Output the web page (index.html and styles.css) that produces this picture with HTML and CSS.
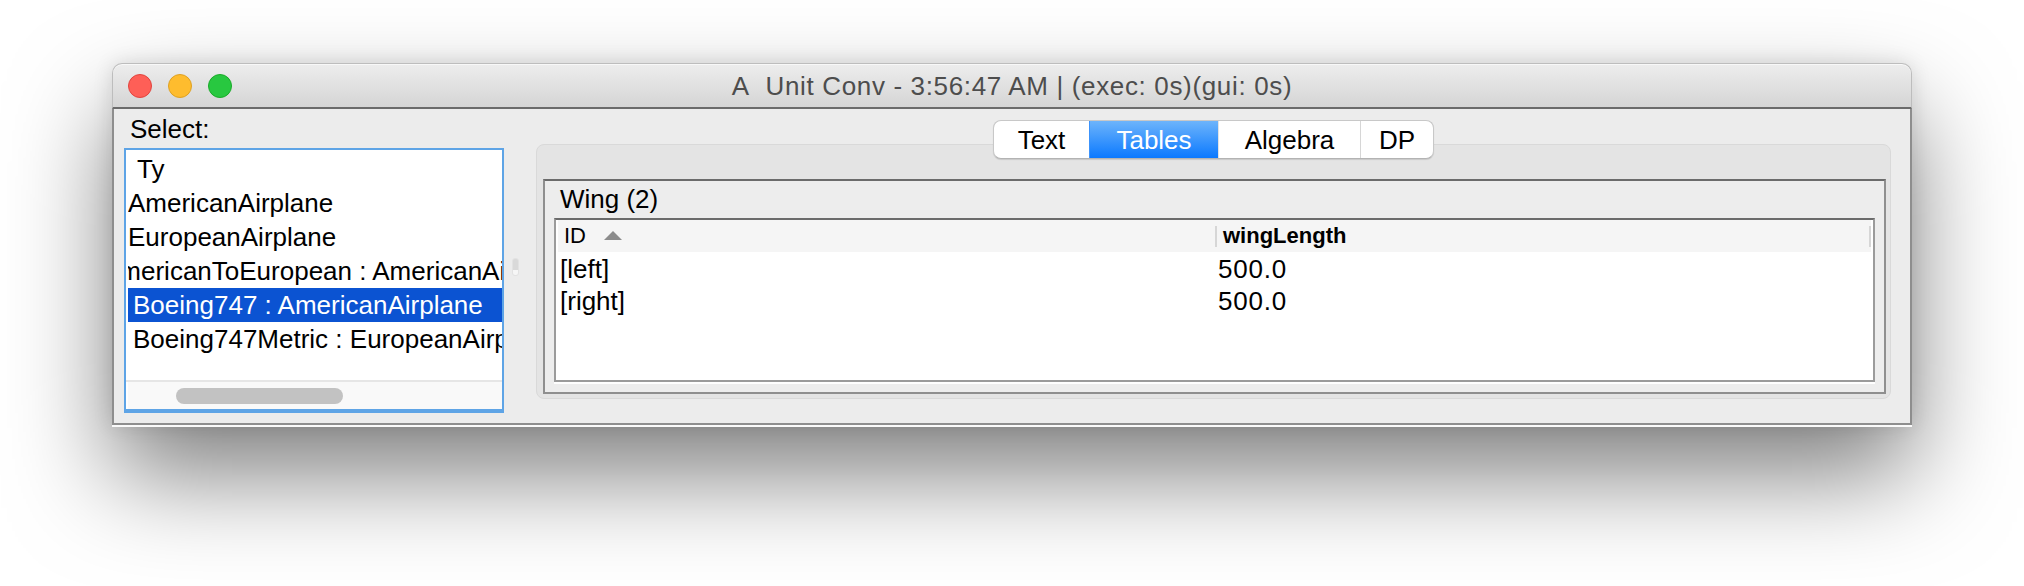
FILE: index.html
```html
<!DOCTYPE html>
<html>
<head>
<meta charset="utf-8">
<link rel="stylesheet" href="styles.css">
</head>
<body>
<div class="window">
  <div class="titlebar">
    <div class="lights">
      <span class="light red"></span>
      <span class="light yellow"></span>
      <span class="light green"></span>
    </div>
    <div class="title">A&nbsp; Unit Conv - 3:56:47 AM | (exec: 0s)(gui: 0s)</div>
    <div></div>
  </div>
  <div class="content">
    <div class="left">
      <div class="select-label">Select:</div>
      <div class="listbox">
        <div class="viewport">
          <div class="row indent-ty">Ty</div>
          <div class="row">AmericanAirplane</div>
          <div class="row">EuropeanAirplane</div>
          <div class="row"><span class="clipped">AmericanToEuropean : AmericanAirplane</span></div>
          <div class="row selected">Boeing747 : AmericanAirplane</div>
          <div class="row indent-b">Boeing747Metric : EuropeanAirplane</div>
        </div>
        <div class="hscroll"><div class="thumb"></div></div>
      </div>
    </div>
    <div class="divider"><div class="knob"></div></div>
    <div class="right">
      <div class="tabs">
        <div class="tab t-text">Text</div>
        <div class="tab t-tables active">Tables</div>
        <div class="tab t-algebra">Algebra</div>
        <div class="tab t-dp">DP</div>
      </div>
      <div class="tabbox">
        <div class="panel">
          <div class="panel-label">Wing (2)</div>
          <div class="table">
            <div class="thead">
              <div class="th col1">ID<span class="sort-arrow"></span></div>
              <div class="sep"></div>
              <div class="th col2">wingLength</div>
              <div class="sep"></div>
            </div>
            <div class="tr">
              <div class="td c1">[left]</div>
              <div class="td c2">500.0</div>
            </div>
            <div class="tr">
              <div class="td c1">[right]</div>
              <div class="td c2">500.0</div>
            </div>
          </div>
        </div>
      </div>
    </div>
  </div>
</div>
</body>
</html>
```
FILE: styles.css
```css
html, body {
  margin: 0;
  padding: 0;
}
body {
  width: 2024px;
  height: 586px;
  overflow: hidden;
  background: #ffffff;
  font-family: "Liberation Sans", Arial, sans-serif;
  color: #000;
}
.window {
  margin: 63px 0 0 112px;
  width: 1800px;
  border-radius: 10px 10px 0 0;
  box-shadow: 0 50px 100px rgba(0,0,0,0.5), 0 0 20px rgba(0,0,0,0.12);
  background: #ececec;
}
.titlebar {
  box-sizing: border-box;
  height: 46px;
  border: 1px solid #bdbdbd;
  border-bottom: 2px solid #6b6b6b;
  border-radius: 10px 10px 0 0;
  background: linear-gradient(#ededed, #d5d5d5);
  box-shadow: inset 0 1px 0 #f8f8f8;
  display: grid;
  grid-template-columns: 1fr auto 1fr;
  align-items: center;
}
.lights {
  display: flex;
  gap: 16px;
  padding-left: 15px;
}
.light {
  box-sizing: border-box;
  width: 24px;
  height: 24px;
  border-radius: 50%;
  border: 1px solid;
}
.red { background: #fe5f57; border-color: #e1443e; }
.yellow { background: #febc2e; border-color: #dea123; }
.green { background: #28c840; border-color: #1aab29; }
.title {
  font-size: 26px;
  letter-spacing: 0.65px;
  color: #4d4d4d;
  white-space: nowrap;
  padding-top: 1px;
}
.content {
  display: flex;
  height: 314px;
  border: 2px solid #8e8e8e;
  border-top: 0;
  background: #ececec;
  box-shadow: 0 2px 0 #fafafa;
}
.left {
  width: 390px;
  box-sizing: border-box;
  padding-left: 10px;
}
.select-label {
  font-size: 26px;
  line-height: 30px;
  margin-top: 5px;
  padding-left: 6px;
}
.listbox {
  box-sizing: border-box;
  margin-top: 4px;
  width: 380px;
  height: 265px;
  border: 2px solid #5ea4e6;
  border-bottom-width: 4px;
  background: #fff;
  display: flex;
  flex-direction: column;
}
.viewport {
  height: 228px;
  padding: 2px 0 0 2px;
  overflow: hidden;
  border-bottom: 2px solid #e6e6e6;
}
.row {
  height: 34px;
  line-height: 34px;
  font-size: 26px;
  white-space: nowrap;
  overflow: hidden;
}
.indent-ty { padding-left: 9px; }
.indent-b { padding-left: 5px; }
.clipped {
  display: inline-block;
  margin-left: -26px;
}
.row.selected {
  background: #0b53d2;
  color: #fff;
  padding-left: 5px;
}
.hscroll {
  flex: 1;
  background: #f9f9f9;
  margin-left: 2px;
  display: flex;
  align-items: center;
}
.thumb {
  width: 167px;
  height: 16px;
  margin-left: 48px;
  border-radius: 8px;
  background: #c2c2c2;
}
.divider {
  width: 32px;
  display: flex;
  align-items: center;
}
.knob {
  box-sizing: border-box;
  margin-left: 8px;
  margin-top: 2px;
  width: 7px;
  height: 18px;
  border-radius: 3px;
  background: linear-gradient(#d9d9d9 0, #d9d9d9 70%, #f6f6f6 70%);
  border: 1px solid #e2e2e2;
}
.right {
  flex: 1;
  padding: 11px 19px 0 0;
  display: flex;
  flex-direction: column;
}
.tabs {
  position: relative;
  z-index: 1;
  align-self: center;
  display: flex;
  height: 39px;
  box-sizing: border-box;
  border: 1px solid #c8c8c8;
  border-bottom-color: #b3b3b3;
  border-radius: 8px;
  background: #fff;
  box-shadow: 0 1px 1px rgba(0,0,0,0.12);
  overflow: hidden;
}
.tab {
  box-sizing: border-box;
  height: 37px;
  line-height: 37px;
  font-size: 26px;
  text-align: center;
  border-left: 1px solid #d6d6d6;
  padding-top: 1px;
}
.t-text { width: 95px; border-left: 0; }
.t-tables { width: 129px; }
.t-algebra { width: 142px; }
.t-dp { width: 73px; }
.tab.active {
  background: linear-gradient(#6db4fb, #0b79ff);
  color: #fff;
  border-left-color: #3c93fb;
}
.tab.active + .tab { border-left-color: #e3e3e3; }
.tabbox {
  margin-top: -15px;
  height: 255px;
  box-sizing: border-box;
  border: 1px solid #d9d9d9;
  border-radius: 8px;
  background: #e4e4e4;
  padding: 34px 4px 0 6px;
}
.panel {
  box-sizing: border-box;
  height: 215px;
  border: 2px solid #8f8f8f;
  border-top-color: #6b6b6b;
  background: #ededed;
  padding: 3px 9px 0 9px;
}
.panel-label {
  font-size: 26px;
  line-height: 30px;
  padding-left: 6px;
}
.table {
  box-sizing: border-box;
  margin-top: 4px;
  height: 164px;
  border: 2px solid #9b9b9b;
  border-top-color: #6b6b6b;
  background: #fff;
  padding: 0 2px;
  box-shadow: 0 2px 0 #fff;
}
.thead {
  display: flex;
  align-items: center;
  height: 32px;
  background: #f5f5f5;
}
.th {
  font-size: 22px;
  line-height: 32px;
  display: flex;
  align-items: center;
}
.th.col1 {
  width: 651px;
  padding-left: 6px;
}
.th.col2 {
  flex: 1;
  padding-left: 6px;
  font-weight: bold;
}
.sep {
  width: 2px;
  height: 21px;
  background: #d6d6d6;
}
.sort-arrow {
  width: 0;
  height: 0;
  margin-left: 18px;
  margin-top: -1px;
  border-left: 9px solid transparent;
  border-right: 9px solid transparent;
  border-bottom: 9px solid #8c8c8c;
}
.tr {
  display: flex;
  height: 32px;
}
.td {
  font-size: 26px;
  line-height: 32px;
  padding-top: 1px;
}
.td.c1 {
  width: 655px;
  padding-left: 2px;
}
.td.c2 {
  flex: 1;
  padding-left: 3px;
  letter-spacing: 0.8px;
}
```
